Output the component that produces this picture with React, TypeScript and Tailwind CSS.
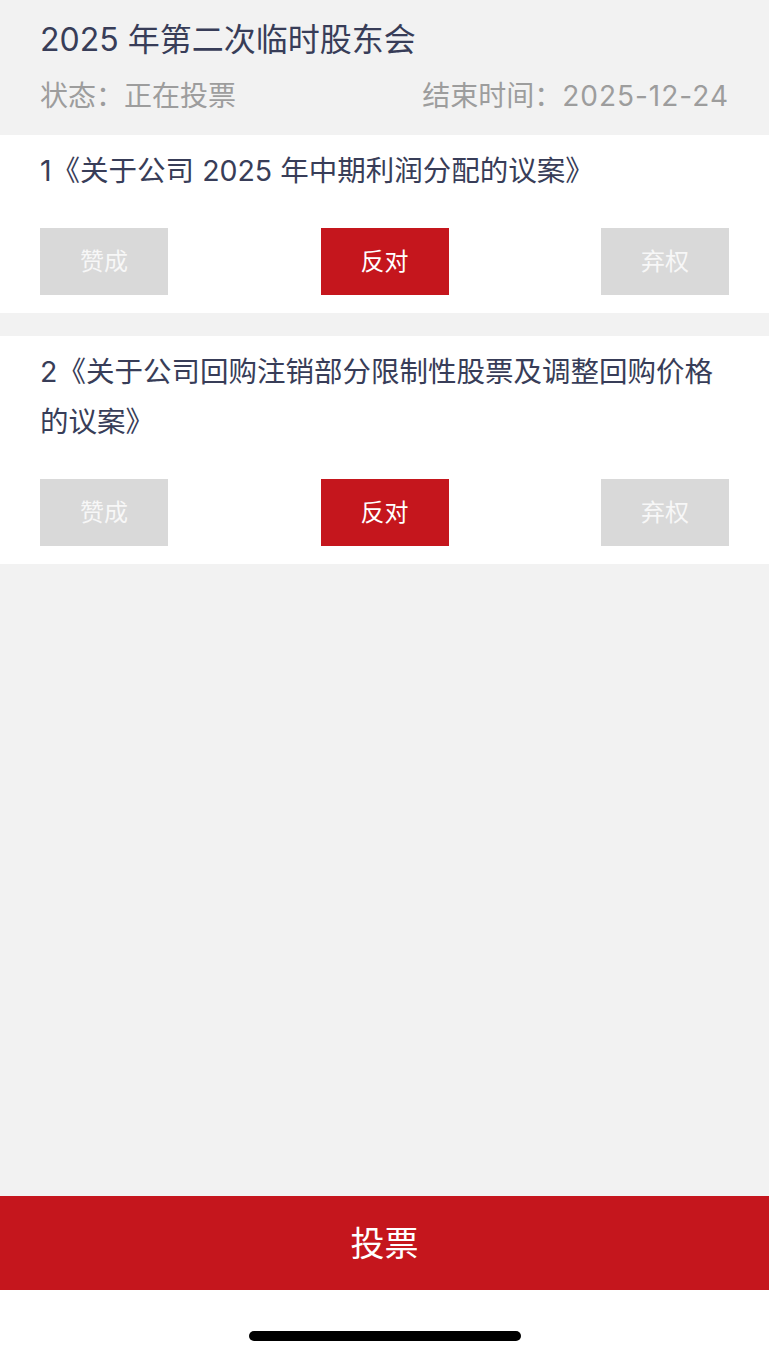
const proposals = [
  { id: 1, title: "关于公司 2025 年中期利润分配的议案" },
  { id: 2, title: "关于公司回购注销部分限制性股票及调整回购价格的议案" },
];

function VoteButtons() {
  return (
    <div className="mt-[32px] flex justify-between">
      <button className="h-[67px] w-[128px] bg-[#d9d9d9] text-[24px] text-[#f7f7f7]">赞成</button>
      <button className="h-[67px] w-[128px] bg-[#c5161d] text-[24px] text-white">反对</button>
      <button className="h-[67px] w-[128px] bg-[#d9d9d9] text-[24px] text-[#f7f7f7]">弃权</button>
    </div>
  );
}

export default function App() {
  return (
    <div className="flex min-h-screen flex-col bg-[#f2f2f2] font-['Inter','Noto_Sans_CJK_SC',sans-serif]">
      <header className="px-10 pt-[18px] pb-[21px]">
        <h1 className="text-[32px] leading-[44px] text-[#383d58]">2025 年第二次临时股东会</h1>
        <div className="mt-[16px] flex justify-between text-[28px] leading-[36px] text-[#9d9d9d]">
          <span>状态：正在投票</span>
          <span>
            结束时间：<span className="tracking-[1px]">2025-12-24</span>
          </span>
        </div>
      </header>

      <div className="flex flex-col gap-[23px]">
        {proposals.map((p) => (
          <section key={p.id} className="bg-white px-10 pt-[11px] pb-[18px]">
            <p className="text-[28.5px] leading-[50px] text-[#383d58]">
              {p.id}《{p.title}》
            </p>
            <VoteButtons />
          </section>
        ))}
      </div>

      <div className="flex-1" />

      <button className="h-[94px] w-full bg-[#c5161d] text-[34px] text-white">投票</button>
      <div className="flex h-[67px] justify-center bg-white pt-[41px]">
        <div className="h-[10px] w-[272px] rounded-full bg-black" />
      </div>
    </div>
  );
}
